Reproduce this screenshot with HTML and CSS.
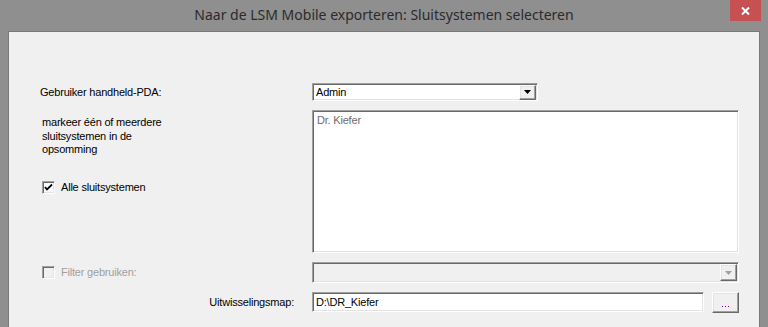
FILE: index.html
```html
<!DOCTYPE html>
<html>
<head>
<meta charset="utf-8">
<link rel="stylesheet" href="styles.css">
</head>
<body>
<div class="window">
  <div class="titlebar">
    <span class="title">Naar de LSM Mobile exporteren: Sluitsystemen selecteren</span>
    <div class="close"><svg width="9" height="8" viewBox="0 0 9 8"><path d="M1 0.5 L8 7.5 M8 0.5 L1 7.5" stroke="#fff" stroke-width="2"/></svg></div>
  </div>
  <div class="client">
    <div class="form">
      <div class="label row-a">Gebruiker handheld-PDA:</div>
      <div class="combo row-a">
        <span class="combo-text">Admin</span>
        <span class="drop"><svg width="7" height="4" viewBox="0 0 7 4"><path d="M0 0 H7 L3.5 4 Z" fill="#000"/></svg></span>
      </div>

      <div class="left-b">
        <p class="hint">markeer één of meerdere<br>sluitsystemen in de<br>opsomming</p>
        <label class="check">
          <span class="box"><svg width="9" height="9" viewBox="0 0 9 9"><path d="M1 4 L3 6.5 L8 1.5" stroke="#000" stroke-width="1.8" fill="none"/></svg></span>
          <span>Alle sluitsystemen</span>
        </label>
      </div>
      <div class="listbox">
        <div class="item">Dr. Kiefer</div>
      </div>

      <label class="check disabled">
        <span class="box"></span>
        <span>Filter gebruiken:</span>
      </label>
      <div class="combo disabled-combo">
        <span class="combo-text"></span>
        <span class="drop"><svg width="7" height="4" viewBox="0 0 7 4"><path d="M0 0 H7 L3.5 4 Z" fill="#a0a0a0"/></svg></span>
      </div>

      <div class="label right">Uitwisselingsmap:</div>
      <div class="pathrow">
        <div class="textbox">D:\DR_Kiefer</div>
        <div class="btn"><span class="dots"><i class="d1"></i><i class="d2"></i><i class="d3"></i></span></div>
      </div>
    </div>
  </div>
</div>
</body>
</html>
```

FILE: styles.css
```css
html, body {
  margin: 0;
  padding: 0;
  width: 768px;
  height: 327px;
  overflow: hidden;
  background: #8f8f8f;
}

.window {
  width: 768px;
  height: 327px;
  background: #8f8f8f;
  display: flex;
  flex-direction: column;
  position: relative;
}

.titlebar {
  height: 31px;
  flex: none;
  display: flex;
  align-items: flex-start;
  justify-content: center;
}

.title {
  font-family: "Noto Sans", "Open Sans", sans-serif;
  font-size: 14px;
  color: #2b2b2b;
  line-height: 18px;
  margin-top: 6px;
}

.close {
  position: absolute;
  top: 0;
  right: 7px;
  width: 31px;
  height: 21px;
  background: #c75050;
  display: flex;
  align-items: center;
  justify-content: center;
}

.client {
  flex: 1;
  margin-left: 8px;
  width: 750px;
  background: #f0f0f0;
  border: 1px solid #7a7a7a;
  border-bottom: none;
  font-family: "Liberation Sans", Arial, sans-serif;
  font-size: 11px;
  letter-spacing: -0.2px;
  color: #000;
}

.form {
  padding: 51px 20px 0 31px;
  display: grid;
  grid-template-columns: 272px 427px;
  grid-template-rows: 18px 143px 21px 20px;
  row-gap: 9px;
  align-items: center;
}

.label {
  line-height: 13px;
}

.right {
  text-align: right;
  padding-right: 18px;
}

.combo {
  height: 18px;
  box-sizing: border-box;
  background: #fff;
  border-style: solid;
  border-width: 1px;
  border-color: #a0a0a0 #fff #fff #a0a0a0;
  box-shadow: inset 1px 1px 0 #696969, inset -1px -1px 0 #e3e3e3;
  display: flex;
  align-items: center;
  justify-content: space-between;
  padding: 2px 2px 2px 3px;
  width: 226px;
}

.combo-text {
  line-height: 13px;
}

.drop {
  width: 17px;
  height: 15px;
  box-sizing: border-box;
  background: #f0f0f0;
  border-style: solid;
  border-width: 1px;
  border-color: #fff #696969 #696969 #fff;
  box-shadow: inset -1px -1px 0 #a0a0a0, inset 1px 1px 0 #e3e3e3;
  display: flex;
  align-items: center;
  justify-content: center;
  margin-right: -1px;
}

.disabled-combo {
  width: 427px;
  height: 21px;
  background: #f0f0f0;
}

.disabled-combo .drop {
  height: 17px;
}

.left-b {
  align-self: stretch;
  padding-left: 2px;
  padding-top: 6px;
  display: flex;
  flex-direction: column;
}

.hint {
  margin: 0;
  line-height: 13.5px;
}

.check {
  display: flex;
  align-items: center;
  gap: 6px;
  line-height: 13px;
}

.left-b .check {
  margin-top: 24px;
}

.box {
  width: 13px;
  height: 13px;
  box-sizing: border-box;
  background: #fff;
  border-style: solid;
  border-width: 1px;
  border-color: #a0a0a0 #fff #fff #a0a0a0;
  box-shadow: inset 1px 1px 0 #696969, inset -1px -1px 0 #e3e3e3;
  display: flex;
  align-items: center;
  justify-content: center;
}

.disabled {
  color: #a0a0a0;
  padding-left: 2px;
}

.disabled .box {
  background: #f0f0f0;
}

.listbox {
  height: 143px;
  box-sizing: border-box;
  background: #fff;
  border-style: solid;
  border-width: 1px;
  border-color: #a0a0a0 #fff #fff #a0a0a0;
  box-shadow: inset 1px 1px 0 #696969, inset -1px -1px 0 #e3e3e3;
  padding: 3px 4px;
}

.item {
  color: #6d6d6d;
  line-height: 13px;
}

.pathrow {
  display: flex;
  align-items: center;
  gap: 8px;
}

.textbox {
  width: 392px;
  height: 20px;
  box-sizing: border-box;
  background: #fff;
  border-style: solid;
  border-width: 1px;
  border-color: #a0a0a0 #fff #fff #a0a0a0;
  box-shadow: inset 1px 1px 0 #696969, inset -1px -1px 0 #e3e3e3;
  padding: 3px 3px;
  line-height: 13px;
}

.btn {
  width: 27px;
  height: 21px;
  box-sizing: border-box;
  background: #f0f0f0;
  border-style: solid;
  border-width: 1px;
  border-color: #fff #696969 #696969 #fff;
  box-shadow: inset -1px -1px 0 #a0a0a0, inset 1px 1px 0 #e3e3e3;
  display: flex;
  align-items: flex-end;
  justify-content: center;
  padding-bottom: 5px;
}

.dots {
  display: flex;
  gap: 2px;
}

.dots i {
  width: 1px;
  height: 1px;
  display: block;
}

.d1 { background: #5a00c8; }
.d2 { background: #003a9a; }
.d3 { background: #9a0070; }
```
